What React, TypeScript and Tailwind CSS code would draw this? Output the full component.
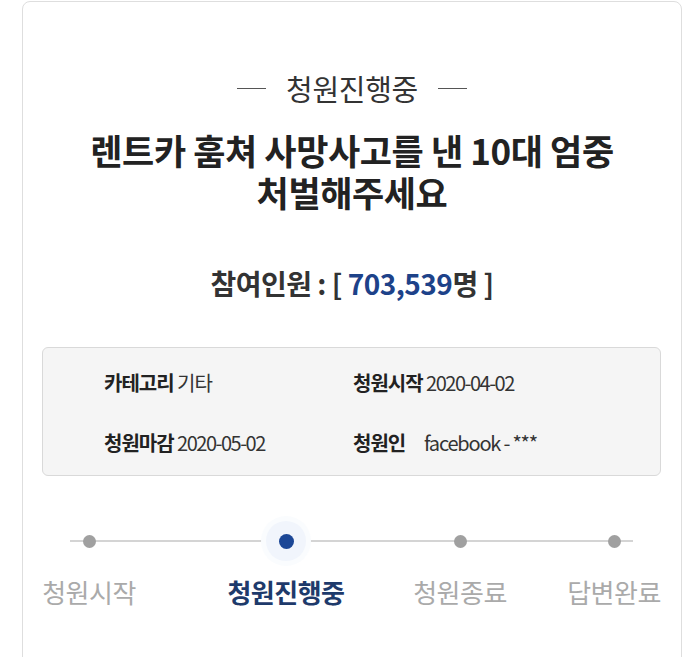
export default function App() {
  const font = { fontFamily: '"Noto Sans CJK KR", "Noto Sans", sans-serif' };
  return (
    <div className="h-[657px] w-[700px] overflow-hidden bg-white pt-px" style={font}>
      <div className="ml-[22px] h-[700px] w-[660px] rounded-t-[8px] border border-[#dedede] bg-white">
        <div className="mt-[68px] flex items-center justify-center text-[29px] leading-[36px] tracking-[-0.3px] text-[#333]">
          <span className="h-px w-[29px] bg-[#555]" />
          <span className="mx-[20px]">청원진행중</span>
          <span className="h-px w-[29px] bg-[#555]" />
        </div>
        <h1 className="mt-[23px] text-center text-[35px] font-bold leading-[42px] tracking-[-0.4px] text-[#222]">
          렌트카 훔쳐 사망사고를 낸 10대 엄중
          <br />
          처벌해주세요
        </h1>
        <div className="mt-[52px] text-center text-[28px] font-bold leading-[36px] tracking-[-0.5px] text-[#333]">
          참여인원 : [ <span className="text-[#1d4289]">703,539</span>명 ]
        </div>
        <div className="ml-[19px] mt-[46px] h-[129px] w-[619px] rounded-[6px] border border-[#d9d9d9] bg-[#f5f5f5] pl-[61px] pt-[23px] text-[20px] leading-[24px] tracking-[-1px] text-[#333]">
          <div className="grid grid-cols-[249px_1fr] gap-y-[36px]">
            <div>
              <span className="font-bold text-[#222]">카테고리</span> 기타
            </div>
            <div>
              <span className="font-bold text-[#222]">청원시작</span>{" "}
              <span className="tracking-[-1.5px]">2020-04-02</span>
            </div>
            <div>
              <span className="font-bold text-[#222]">청원마감</span>{" "}
              <span className="tracking-[-1.5px]">2020-05-02</span>
            </div>
            <div className="flex">
              <span className="w-[71px] font-bold text-[#222]">청원인</span>
              <span className="tracking-[-1.2px]">facebook - ***</span>
            </div>
          </div>
        </div>
        <div className="relative mt-[40px] ml-[19px] flex">
          <div className="absolute left-[28px] top-[24px] h-[2px] w-[563px] bg-[#d4d4d4]" />
          <div className="relative flex w-[94px] flex-col items-center">
            <div className="flex h-[50px] items-center justify-center">
              <span className="h-[13px] w-[13px] rounded-full bg-[#a0a0a0]" />
            </div>
            <span className="mt-[11px] whitespace-nowrap text-[26px] leading-[30px] tracking-[-0.5px] text-[#aaa]">청원시작</span>
          </div>
          <div className="relative ml-[85px] flex w-[130px] flex-col items-center">
            <div className="flex h-[50px] w-[50px] items-center justify-center rounded-full bg-[#fafcfe]">
              <div className="flex h-[40px] w-[40px] items-center justify-center rounded-full bg-[#f1f5fc]">
                <span className="h-[15px] w-[15px] rounded-full bg-[#1c4796]" />
              </div>
            </div>
            <span className="mt-[11px] whitespace-nowrap text-[26px] font-bold leading-[30px] tracking-[-0.5px] text-[#1e3a6b]">청원진행중</span>
          </div>
          <div className="relative ml-[59px] flex w-[100px] flex-col items-center">
            <div className="flex h-[50px] items-center justify-center">
              <span className="h-[13px] w-[13px] rounded-full bg-[#a0a0a0]" />
            </div>
            <span className="mt-[11px] whitespace-nowrap text-[26px] leading-[30px] tracking-[-0.5px] text-[#aaa]">청원종료</span>
          </div>
          <div className="relative ml-[56px] flex w-[96px] flex-col items-center">
            <div className="flex h-[50px] items-center justify-center">
              <span className="h-[13px] w-[13px] rounded-full bg-[#a0a0a0]" />
            </div>
            <span className="mt-[11px] whitespace-nowrap text-[26px] leading-[30px] tracking-[-0.5px] text-[#aaa]">답변완료</span>
          </div>
        </div>
      </div>
    </div>
  );
}
